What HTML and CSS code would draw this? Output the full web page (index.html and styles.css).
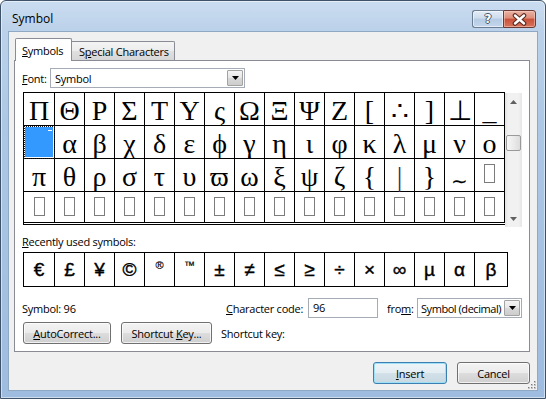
FILE: index.html
```html
<!DOCTYPE html>
<html>
<head>
<meta charset="utf-8">
<link rel="stylesheet" href="styles.css">
</head>
<body>
<div class="window">
  <div class="titlebar">
    <span class="title">Symbol</span>
    <div class="caption">
      <span class="cbtn help">?</span>
      <span class="cbtn close"><svg width="17" height="13" viewBox="0 0 17 13"><path d="M4 2.5 L13 10.5 M13 2.5 L4 10.5" stroke="#5a2a20" stroke-width="4.6" stroke-linecap="round" fill="none"/><path d="M4 2.5 L13 10.5 M13 2.5 L4 10.5" stroke="#fff" stroke-width="2.4" stroke-linecap="round" fill="none"/></svg></span>
    </div>
  </div>
  <div class="client">
    <div class="tabs">
      <div class="tab active"><span><u>S</u>ymbols</span></div>
      <div class="tab inactive"><span>S<u>p</u>ecial Characters</span></div>
    </div>
    <div class="panel">
      <div class="font-row">
        <span class="lbl"><u>F</u>ont:</span>
        <div class="combo font-combo">
          <span class="val">Symbol</span>
          <span class="dd"><svg width="7" height="4" viewBox="0 0 7 4"><path d="M0 0 H7 L3.5 4 Z" fill="#000"/></svg></span>
        </div>
      </div>
      <div class="grid-wrap">
        <div class="grid">
          <div class="cell">Π</div><div class="cell">Θ</div><div class="cell">Ρ</div><div class="cell">Σ</div>
          <div class="cell">Τ</div><div class="cell">Υ</div><div class="cell">ς</div><div class="cell">Ω</div>
          <div class="cell">Ξ</div><div class="cell">Ψ</div><div class="cell">Ζ</div><div class="cell">[</div>
          <div class="cell">∴</div><div class="cell">]</div><div class="cell">⊥</div><div class="cell">_</div>

          <div class="cell sel"><span class="mark"></span></div><div class="cell">α</div><div class="cell">β</div><div class="cell">χ</div>
          <div class="cell">δ</div><div class="cell">ε</div><div class="cell">ϕ</div><div class="cell">γ</div>
          <div class="cell">η</div><div class="cell">ι</div><div class="cell">φ</div><div class="cell">κ</div>
          <div class="cell">λ</div><div class="cell">μ</div><div class="cell">ν</div><div class="cell">ο</div>

          <div class="cell">π</div><div class="cell">θ</div><div class="cell">ρ</div><div class="cell">σ</div>
          <div class="cell">τ</div><div class="cell">υ</div><div class="cell">ϖ</div><div class="cell">ω</div>
          <div class="cell">ξ</div><div class="cell">ψ</div><div class="cell">ζ</div><div class="cell">{</div>
          <div class="cell thin">|</div><div class="cell">}</div><div class="cell tilde">∼</div><div class="cell nd"><span class="box"></span></div>

          <div class="cell nd"><span class="box"></span></div><div class="cell nd"><span class="box"></span></div><div class="cell nd"><span class="box"></span></div><div class="cell nd"><span class="box"></span></div>
          <div class="cell nd"><span class="box"></span></div><div class="cell nd"><span class="box"></span></div><div class="cell nd"><span class="box"></span></div><div class="cell nd"><span class="box"></span></div>
          <div class="cell nd"><span class="box"></span></div><div class="cell nd"><span class="box"></span></div><div class="cell nd"><span class="box"></span></div><div class="cell nd"><span class="box"></span></div>
          <div class="cell nd"><span class="box"></span></div><div class="cell nd"><span class="box"></span></div><div class="cell nd"><span class="box"></span></div><div class="cell nd"><span class="box"></span></div>
        </div>
        <div class="vscroll">
          <span class="sbtn"><svg width="7" height="4" viewBox="0 0 7 4"><path d="M0 4 L3.5 0 L7 4 Z" fill="#606060"/></svg></span>
          <span class="thumb"></span>
          <span class="track"></span>
          <span class="sbtn"><svg width="7" height="4" viewBox="0 0 7 4"><path d="M0 0 H7 L3.5 4 Z" fill="#606060"/></svg></span>
        </div>
      </div>
      <div class="recent-lbl"><u>R</u>ecently used symbols:</div>
      <div class="recent">
        <div class="rc">€</div><div class="rc">£</div><div class="rc">¥</div><div class="rc">©</div>
        <div class="rc"><span class="sup">®</span></div><div class="rc"><span class="sup">™</span></div><div class="rc">±</div><div class="rc">≠</div>
        <div class="rc">≤</div><div class="rc">≥</div><div class="rc">÷</div><div class="rc">×</div>
        <div class="rc">∞</div><div class="rc">µ</div><div class="rc">α</div><div class="rc">β</div>
      </div>
      <div class="code-row">
        <span class="sym-info">Symbol: 96</span>
        <span class="cc-lbl"><u>C</u>haracter code:</span>
        <div class="input code-input">96</div>
        <span class="from-lbl">fro<u>m</u>:</span>
        <div class="combo from-combo">
          <span class="val">Symbol (decimal)</span>
          <span class="dd"><svg width="7" height="4" viewBox="0 0 7 4"><path d="M0 0 H7 L3.5 4 Z" fill="#000"/></svg></span>
        </div>
      </div>
      <div class="btn-row">
        <div class="btn autocorrect"><span><u>A</u>utoCorrect...</span></div>
        <div class="btn shortcut"><span>Shortcut <u>K</u>ey...</span></div>
        <span class="sk-lbl">Shortcut key:</span>
      </div>
    </div>
    <div class="footer">
      <div class="btn default insert"><span><u>I</u>nsert</span></div>
      <div class="btn cancel"><span>Cancel</span></div>
    </div>
    <svg class="grip" width="10" height="10" viewBox="0 0 10 10">
      <g fill="#c4c4c4"><rect x="8" y="2" width="2" height="2"/><rect x="5" y="5" width="2" height="2"/><rect x="8" y="5" width="2" height="2"/><rect x="2" y="8" width="2" height="2"/><rect x="5" y="8" width="2" height="2"/><rect x="8" y="8" width="2" height="2"/></g>
      <g fill="#7a7a7a"><rect x="8" y="2" width="1" height="1"/><rect x="5" y="5" width="1" height="1"/><rect x="8" y="5" width="1" height="1"/><rect x="2" y="8" width="1" height="1"/><rect x="5" y="8" width="1" height="1"/><rect x="8" y="8" width="1" height="1"/></g>
    </svg>
  </div>
</div>
</body>
</html>
```

FILE: styles.css
```css
* { box-sizing: border-box; }

html, body {
  margin: 0;
  padding: 0;
  background: #fff;
}

body {
  font-family: "Open Sans", "Noto Sans", sans-serif;
  font-size: 11px;
  letter-spacing: -0.25px;
  color: #000;
}

u { text-decoration: underline; text-underline-offset: 1px; }

.window {
  width: 546px;
  height: 399px;
  border: 1px solid #3e5269;
  border-radius: 6px 6px 0 0;
  background: linear-gradient(180deg, #cadcf0 0px, #bcd2ea 28px, #adc8e5 120px, #a3c0e1 300px, #9ebcdf 399px);
  box-shadow: inset 0 0 0 1px rgba(255, 255, 255, 0.5);
  padding: 0 7px 7px 7px;
  display: flex;
  flex-direction: column;
}

.titlebar {
  height: 30px;
  display: flex;
  justify-content: space-between;
  align-items: flex-start;
}

.title {
  margin: 10px 0 0 4px;
  font-size: 12px;
  letter-spacing: 0;
  line-height: 16px;
  color: #000;
}

.caption {
  display: flex;
  margin: 9px 2px 0 0;
}

.cbtn {
  height: 18px;
  display: flex;
  align-items: center;
  justify-content: center;
}

.help {
  width: 31px;
  border: 1px solid #6a7c92;
  border-right: none;
  border-radius: 3px 0 0 3px;
  background: linear-gradient(180deg, #e3ecf6 0%, #cddcee 45%, #b6cbe3 50%, #c3d6ec 100%);
  box-shadow: inset 0 0 0 1px rgba(255, 255, 255, 0.55);
  color: #fff;
  font-family: "DejaVu Sans", sans-serif;
  font-weight: bold;
  font-size: 12px;
  letter-spacing: 0;
  line-height: 14px;
  text-shadow: 1px 0 0 #47586c, -1px 0 0 #47586c, 0 1px 0 #47586c, 0 -1px 0 #47586c;
}

.close {
  width: 33px;
  border: 1px solid #6b3b33;
  border-radius: 0 3px 3px 0;
  background: linear-gradient(180deg, #eab3a5 0%, #dc8c78 45%, #c9503a 50%, #d7735a 100%);
  box-shadow: inset 0 0 0 1px rgba(255, 220, 210, 0.45);
}

.client {
  flex: 1;
  position: relative;
  background: #f0f0f0;
  border: 1px solid #8fa8c4;
  padding: 6px 7px 0 5px;
  display: flex;
  flex-direction: column;
}

.tabs {
  display: flex;
  align-items: flex-end;
  height: 23px;
  margin-left: 1px;
  margin-bottom: -1px;
  position: relative;
  z-index: 1;
}

.tab {
  border: 1px solid #898c95;
  white-space: nowrap;
}

.tab.active {
  width: 57px;
  height: 23px;
  border-bottom: none;
  border-radius: 2px 2px 0 0;
  background: #fff;
  padding: 3px 0 0 6px;
  line-height: 17px;
}

.tab.inactive {
  width: 103px;
  height: 19px;
  margin-bottom: 1px;
  border-left: none;
  border-bottom: none;
  border-radius: 0 2px 0 0;
  background: linear-gradient(180deg, #f4f4f4 0%, #ececec 50%, #e0e0e0 50%, #d6d6d6 100%);
  padding: 1px 0 0 7px;
  line-height: 17px;
}

.panel {
  height: 292px;
  background: #fff;
  border: 1px solid #898c95;
  padding: 7px 7px 0 7px;
  display: flex;
  flex-direction: column;
}

.font-row {
  display: flex;
  align-items: center;
  height: 20px;
}

.lbl {
  width: 28px;
}

.combo {
  height: 20px;
  border: 1px solid #a5acb5;
  background: #fff;
  display: flex;
  align-items: center;
  padding: 1px;
}

.combo .val {
  flex: 1;
  padding-left: 3px;
  white-space: nowrap;
  overflow: hidden;
}

.combo .dd {
  width: 16px;
  height: 16px;
  flex: none;
  border: 1px solid #a3a3a3;
  border-radius: 1px;
  background: linear-gradient(180deg, #f4f4f4 0%, #e6e6e6 50%, #d8d8d8 51%, #cdcdcd 100%);
  display: flex;
  align-items: center;
  justify-content: center;
}

.font-combo {
  width: 195px;
}

.grid-wrap {
  margin-top: 4px;
  margin-left: 1px;
  display: flex;
  align-items: flex-start;
  height: 135px;
}

.grid {
  display: grid;
  grid-template-columns: 31px repeat(15, 30px);
  grid-template-rows: 33px 33px 33px 31px;
  border-left: 1px solid #000;
  border-top: 1px solid #000;
  border-bottom: 1px solid #000;
  padding-bottom: 1px;
}

.cell {
  border-right: 1px solid #000;
  border-bottom: 1px solid #000;
  display: flex;
  justify-content: center;
  font-family: "Liberation Serif", "Times New Roman", serif;
  font-size: 28px;
  letter-spacing: 0;
  line-height: 32px;
  padding-top: 2px;
  color: #000;
}

.cell.tilde {
  font-size: 20px;
  padding-top: 6px;
}

.cell.thin {
  color: #3a2a5a;
}

.cell.sel {
  background: #3399ff;
  outline: 1px dotted #1a1a1a;
  outline-offset: -1px;
  box-shadow: inset 0 0 0 1px #fff;
}

.mark {
  width: 4px;
  height: 1px;
  background: #fff;
  align-self: flex-start;
  margin: 2px 2px 0 auto;
}

.cell.nd .box {
  width: 11px;
  height: 19px;
  margin-top: 3px;
  border: 1px solid #7c7c7c;
}

.vscroll {
  width: 17px;
  height: 134px;
  margin-top: 1px;
  display: flex;
  flex-direction: column;
  background: linear-gradient(90deg, #e4e4e4 0%, #f1f1f1 20%, #f1f1f1 80%, #e6e6e6 100%);
}

.sbtn {
  height: 17px;
  display: flex;
  align-items: center;
  justify-content: center;
}

.thumb {
  height: 16px;
  margin: 25px 1px 0 1px;
  border: 1px solid #9a9a9a;
  border-radius: 2px;
  background: linear-gradient(90deg, #f6f6f6 0%, #ebebeb 50%, #dcdcdc 100%);
}

.track {
  flex: 1;
}

.recent-lbl {
  margin-top: 7px;
  height: 16px;
  line-height: 16px;
}

.recent {
  margin-top: 2px;
  margin-left: 1px;
  display: grid;
  grid-template-columns: 31px repeat(14, 30px) 33px;
  grid-template-rows: 34px;
  width: 485px;
  border-left: 1px solid #000;
  border-top: 1px solid #000;
}

.rc {
  border-right: 1px solid #000;
  border-bottom: 1px solid #000;
  display: flex;
  align-items: center;
  justify-content: center;
  font-family: "Liberation Sans", Arial, sans-serif;
  font-size: 19px;
  letter-spacing: 0;
  -webkit-text-stroke: 0.4px #000;
  color: #000;
  padding-top: 1px;
}

.rc .sup {
  font-size: 11px;
  align-self: flex-start;
  margin-top: 5px;
  -webkit-text-stroke: 0.2px #000;
}

.code-row {
  margin-top: 11px;
  height: 20px;
  display: flex;
  align-items: center;
}

.sym-info {
  flex: 1;
}

.cc-lbl {
  width: 82px;
  white-space: nowrap;
}

.input {
  height: 20px;
  border: 1px solid #a5acb5;
  background: #fff;
  padding: 0 0 0 4px;
  line-height: 18px;
}

.code-input {
  width: 70px;
  margin-right: 9px;
}

.from-lbl {
  width: 30px;
  white-space: nowrap;
}

.from-combo {
  width: 105px;
}

.from-combo .val {
  padding-left: 2px;
  letter-spacing: -0.45px;
}

.btn-row {
  margin-top: 4px;
  height: 22px;
  display: flex;
  align-items: center;
}

.btn {
  height: 22px;
  border: 1px solid #707070;
  border-radius: 3px;
  background: linear-gradient(180deg, #f3f3f3 0%, #ebebeb 50%, #dddddd 51%, #cfcfcf 100%);
  box-shadow: inset 0 0 0 1px rgba(255, 255, 255, 0.7);
  display: flex;
  align-items: center;
  justify-content: center;
  white-space: nowrap;
}

.autocorrect {
  width: 88px;
  margin-left: 1px;
}

.shortcut {
  width: 91px;
  margin-left: 10px;
}

.sk-lbl {
  margin-left: 9px;
}

.footer {
  margin-top: 10px;
  display: flex;
  justify-content: flex-end;
  gap: 10px;
}

.insert {
  width: 74px;
}

.cancel {
  width: 73px;
}

.btn.default {
  border-color: #3c7fb1;
  background: linear-gradient(180deg, #eef5f9 0%, #e3edf2 50%, #d3e1e9 51%, #c8d9e2 100%);
  box-shadow: inset 0 0 0 1px #9fe0f6;
}

.grip {
  position: absolute;
  right: 1px;
  bottom: 1px;
}
```
